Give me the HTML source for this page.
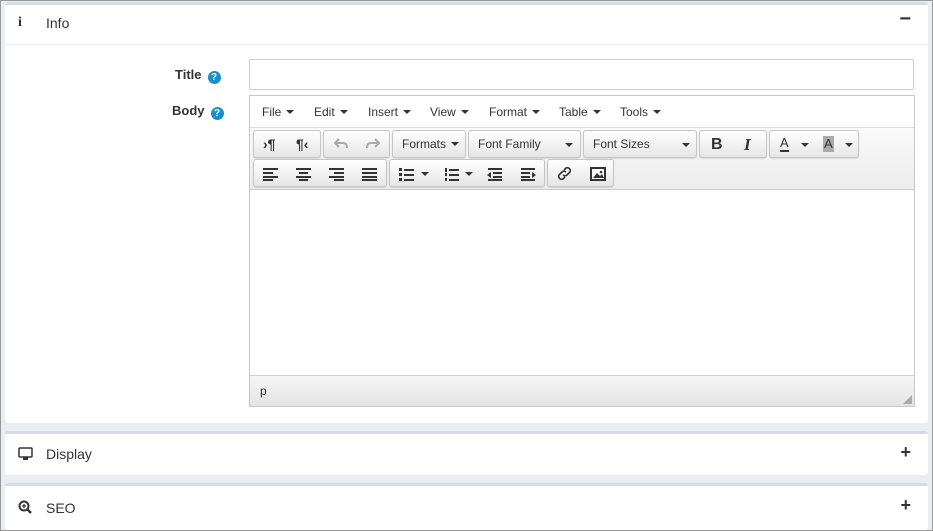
<!DOCTYPE html>
<html><head><meta charset="utf-8"><style>
*{box-sizing:border-box;margin:0;padding:0}
body{width:933px;height:531px;background:#e9eef4;font-family:"Liberation Sans",sans-serif;position:relative;overflow:hidden;border:1px solid #9a9a9a}
.panel{position:absolute;left:4px;width:923px;background:#fff;border-top:3px solid #d5dce6;border-radius:3px}
.hd{position:absolute;left:0;right:0;height:40px;font-size:14px;color:#333}
.hd .t{position:absolute;left:41px;top:10px}
.hd .ic{position:absolute;left:13px;top:10px}
.hd .pm{position:absolute;right:17px;top:6px;font-size:18px;font-weight:bold}
.a{position:absolute}
.lbl{font-size:13px;font-weight:bold;color:#333}
.q{display:inline-block;width:13px;height:13px;border-radius:50%;background:#1a8fd0;color:#fff;font-size:10px;text-align:center;line-height:13px;font-weight:bold;vertical-align:-1px;margin-left:6px}
.grp{position:absolute;height:28px;border:1px solid #c5c5c5;border-radius:3px;background:linear-gradient(#fff,#e6e6e6);box-shadow:0 1px 1px rgba(0,0,0,.1)}
.menu{position:absolute;top:9px;font-size:12px;color:#333}
.caret{display:inline-block;width:0;height:0;border-left:4px solid transparent;border-right:4px solid transparent;border-top:4px solid #333;vertical-align:2px;margin-left:5px}
.caret.a{margin-left:0}
.tx{position:absolute;top:6px;font-size:12px;color:#333}
</style></head><body>
<div class="panel" style="top:1px;height:421px">
 <div class="hd" style="top:0;border-bottom:1px solid #f0f0f0">
  <span class="ic" style="font-weight:bold;font-family:'Liberation Serif',serif;font-size:14px">i</span>
  <span class="t">Info</span><span class="pm" style="font-size:20px;top:3px">−</span>
 </div>
 <div class="a lbl" style="left:170px;top:62px">Title<span class="q">?</span></div>
 <div class="a" style="left:244px;top:54px;width:665px;height:31px;border:1px solid #ccc;border-radius:2px"></div>
 <div class="a lbl" style="left:167px;top:98px">Body<span class="q">?</span></div>
 <div class="a" style="left:244px;top:90px;width:666px;height:312px;border:1px solid #c8c8c8">
  <div class="a" style="left:0;top:0;width:664px;height:32px;background:#fff;border-bottom:1px solid #ddd">
   <span class="menu" style="left:12px">File<i class="caret"></i></span>
   <span class="menu" style="left:64px">Edit<i class="caret"></i></span>
   <span class="menu" style="left:118px">Insert<i class="caret"></i></span>
   <span class="menu" style="left:180px">View<i class="caret"></i></span>
   <span class="menu" style="left:239px">Format<i class="caret"></i></span>
   <span class="menu" style="left:309px">Table<i class="caret"></i></span>
   <span class="menu" style="left:370px">Tools<i class="caret"></i></span>
  </div>
  <div class="a" style="left:0;top:32px;width:664px;height:62px;background:linear-gradient(#fafafa,#ececec);border-bottom:1px solid #ccc">
   <div class="grp" style="left:3px;top:2px;width:68px">
    <span class="tx" style="left:9px;font-weight:bold;font-size:14px;top:5px">›¶</span>
    <span class="tx" style="left:42px;font-weight:bold;font-size:14px;top:5px">¶‹</span>
   </div>
   <div class="grp" style="left:73px;top:2px;width:67px">
    <svg class="a" style="left:10px;top:7px" width="14" height="12"><path d="M5 1L1 5L5 9M1 5H9Q13 5 13 10" fill="none" stroke="#aaa" stroke-width="2"/></svg>
    <svg class="a" style="left:42px;top:7px" width="14" height="12"><path d="M9 1L13 5L9 9M13 5H5Q1 5 1 10" fill="none" stroke="#aaa" stroke-width="2"/></svg>
   </div>
   <div class="grp" style="left:142px;top:2px;width:74px"><span class="tx" style="left:9px">Formats<i class="caret"></i></span></div>
   <div class="grp" style="left:218px;top:2px;width:113px"><span class="tx" style="left:9px">Font Family</span><i class="caret a" style="left:96px;top:12px"></i></div>
   <div class="grp" style="left:333px;top:2px;width:114px"><span class="tx" style="left:9px">Font Sizes</span><i class="caret a" style="left:98px;top:12px"></i></div>
   <div class="grp" style="left:449px;top:2px;width:68px">
    <span class="tx" style="left:11px;font-weight:bold;font-size:16px;top:5px">B</span>
    <span class="tx" style="left:44px;font-weight:bold;font-style:italic;font-family:'Liberation Serif',serif;font-size:17px;top:4px">I</span>
   </div>
   <div class="grp" style="left:519px;top:2px;width:90px">
    <span class="tx" style="left:10px;font-size:13px;top:5px;border-bottom:2px solid #333;line-height:14px">A</span><i class="caret a" style="left:31px;top:12px"></i>
    <span class="tx" style="left:53px;font-size:13px;top:5px;background:#aaa;line-height:16px;padding:0 1px">A</span><i class="caret a" style="left:75px;top:12px"></i>
   </div>
   <div class="grp" style="left:3px;top:31px;width:134px">
    <svg class="a" style="left:9px;top:7px" width="116" height="14" fill="#333">
     <rect x="0" y="1" width="15" height="2"/><rect x="0" y="5" width="10" height="2"/><rect x="0" y="9" width="15" height="2"/><rect x="0" y="12" width="10" height="2"/>
     <rect x="33" y="1" width="15" height="2"/><rect x="36" y="5" width="9" height="2"/><rect x="33" y="9" width="15" height="2"/><rect x="36" y="12" width="9" height="2"/>
     <rect x="66" y="1" width="15" height="2"/><rect x="71" y="5" width="10" height="2"/><rect x="66" y="9" width="15" height="2"/><rect x="71" y="12" width="10" height="2"/>
     <rect x="99" y="1" width="15" height="2"/><rect x="99" y="5" width="15" height="2"/><rect x="99" y="9" width="15" height="2"/><rect x="99" y="12" width="15" height="2"/>
    </svg>
   </div>
   <div class="grp" style="left:139px;top:31px;width:156px">
    <svg class="a" style="left:9px;top:7px" width="140" height="14" fill="#333">
     <rect x="0" y="1" width="3" height="3"/><rect x="5" y="2" width="10" height="2"/><rect x="0" y="6" width="3" height="3"/><rect x="5" y="7" width="10" height="2"/><rect x="0" y="11" width="3" height="3"/><rect x="5" y="12" width="10" height="2"/>
     <rect x="46" y="1" width="2" height="4"/><rect x="46" y="6" width="2" height="3"/><rect x="46" y="11" width="2" height="3"/><rect x="50" y="2" width="10" height="2"/><rect x="50" y="7" width="10" height="2"/><rect x="50" y="12" width="10" height="2"/>
     <rect x="89" y="1" width="14" height="2"/><rect x="94" y="5" width="9" height="2"/><rect x="94" y="9" width="9" height="2"/><rect x="89" y="12" width="14" height="2"/><path d="M88 8l4-3v6z"/>
     <rect x="122" y="1" width="14" height="2"/><rect x="122" y="5" width="9" height="2"/><rect x="122" y="9" width="9" height="2"/><rect x="122" y="12" width="14" height="2"/><path d="M137 8l-4-3v6z"/>
    </svg>
    <i class="caret a" style="left:31px;top:12px"></i><i class="caret a" style="left:75px;top:12px"></i>
   </div>
   <div class="grp" style="left:297px;top:31px;width:67px">
    <svg class="a" style="left:9px;top:6px" width="16" height="16"><path d="M7 4l2-2a3 3 0 0 1 4 4l-3 3a3 3 0 0 1-4 0M8 11l-2 2a3 3 0 0 1-4-4l3-3a3 3 0 0 1 4 0" fill="none" stroke="#333" stroke-width="1.6"/></svg>
    <svg class="a" style="left:42px;top:7px" width="16" height="14"><rect x="1" y="1" width="14" height="12" fill="#fff" stroke="#333" stroke-width="2"/><path d="M3 11l4-5 3 3 2-2 2 4z" fill="#333"/><circle cx="11" cy="5" r="1.3" fill="#333"/></svg>
   </div>
  </div>
  <div class="a" style="left:0;top:279px;width:664px;height:31px;background:linear-gradient(#f6f6f6,#e4e4e4);border-top:1px solid #d0d0d0">
   <span class="a" style="left:10px;top:8px;font-size:12px;color:#333">p</span>
   <svg class="a" style="right:2px;bottom:2px" width="9" height="9"><path d="M9 0V9H0z" fill="#aaa"/></svg>
  </div>
 </div>
</div>
<div class="panel" style="top:430px;height:44px">
 <div class="hd" style="top:0">
  <svg class="ic" style="top:13px" width="15" height="14"><rect x="1" y="1" width="13" height="9" rx="1" fill="none" stroke="#333" stroke-width="1.5"/><rect x="5" y="10" width="5" height="3" fill="#333"/></svg>
  <span class="t" style="top:12px">Display</span><span class="pm" style="top:8px">+</span>
 </div>
</div>
<div class="panel" style="top:482px;height:47px">
 <div class="hd" style="top:0">
  <svg class="ic" style="top:14px" width="14" height="14"><circle cx="6" cy="6" r="4.5" fill="none" stroke="#333" stroke-width="2"/><path d="M9 9l4 4" stroke="#333" stroke-width="2.5"/><path d="M6 4v4M4 6h4" stroke="#333" stroke-width="1.3"/></svg>
  <span class="t" style="top:14px">SEO</span><span class="pm" style="top:9px">+</span>
 </div>
</div>
</body></html>
